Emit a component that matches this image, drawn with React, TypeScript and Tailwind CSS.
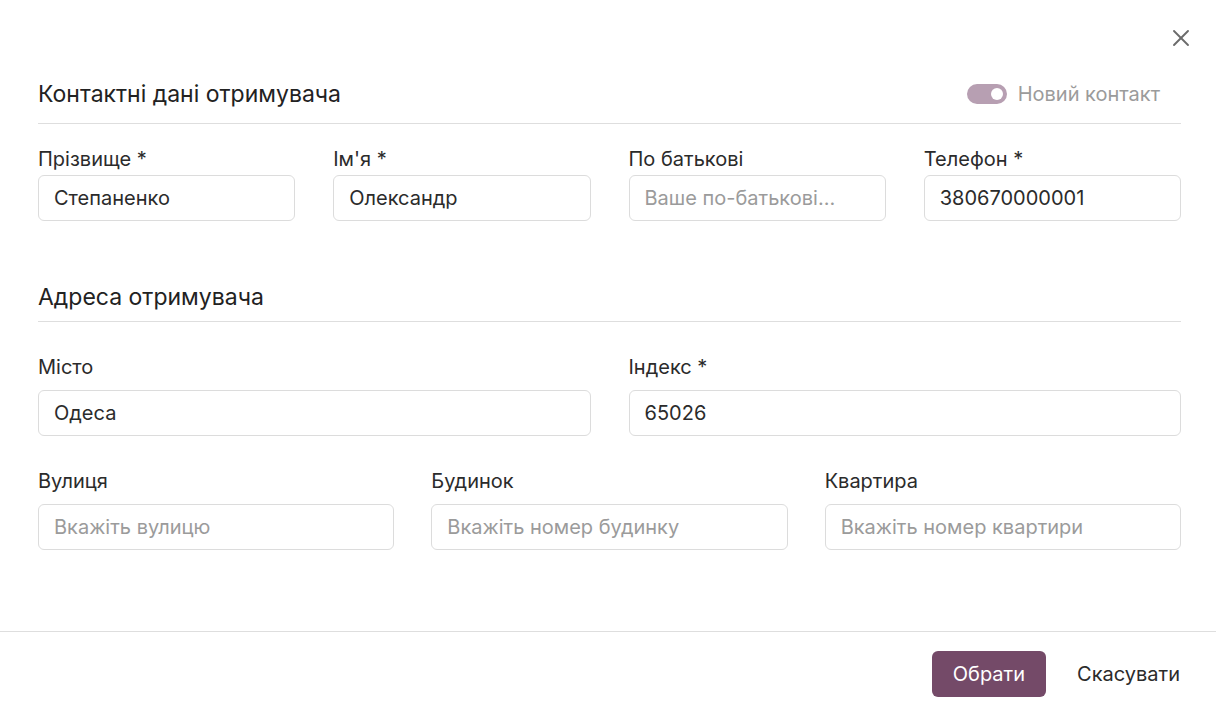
import { X } from 'lucide-react';

const labelCls = 'text-[20px] leading-[26px] text-[#2b2b2b]';
const inputCls =
  'h-[46px] w-full rounded-[6px] border border-[#dcdcdc] px-[15px] text-[20px] text-[#2b2b2b] outline-none placeholder:text-[#9b9b9b]';

function Field({ label, value, placeholder, gap }: { label: string; value?: string; placeholder?: string; gap: string }) {
  return (
    <div className="flex flex-col">
      <label className={labelCls}>{label}</label>
      <input className={`${gap} ${inputCls}`} defaultValue={value} placeholder={placeholder} />
    </div>
  );
}

export default function App() {
  return (
    <div className="h-[715px] w-[1216px] bg-white font-['Inter',sans-serif] flex flex-col">
      <div className="flex-1 pl-[38px] pr-[35px]">
        <div className="flex justify-end pt-[24px]">
          <button className="-mr-[14px] text-[#6b6b6b]">
            <X className="h-[28px] w-[28px]" strokeWidth={1.6} />
          </button>
        </div>

        <div className="mt-[27px] flex items-center justify-between border-b border-[#dedede] pb-[14px]">
          <h2 className="text-[23px] leading-[30px] text-[#222]">Контактні дані отримувача</h2>
          <div className="mr-[21px] flex items-center gap-[11px]">
            <div className="relative h-[20px] w-[40px] rounded-full bg-[#b79fb2]">
              <div className="absolute right-[4px] top-[4px] h-[12px] w-[12px] rounded-full bg-white" />
            </div>
            <span className="text-[20px] text-[#9b9b9b]">Новий контакт</span>
          </div>
        </div>

        <div className="mt-[22px] grid grid-cols-4 gap-x-[38px]">
          <Field gap="mt-[3px]" label="Прізвище *" value="Степаненко" />
          <Field gap="mt-[3px]" label="Ім'я *" value="Олександр" />
          <Field gap="mt-[3px]" label="По батькові" placeholder="Ваше по-батькові..." />
          <Field gap="mt-[3px]" label="Телефон *" value="380670000001" />
        </div>

        <div className="mt-[61px] border-b border-[#dedede] pb-[9px]">
          <h2 className="text-[23px] leading-[30px] text-[#222]">Адреса отримувача</h2>
        </div>

        <div className="mt-[32px] grid grid-cols-2 gap-x-[38px]">
          <Field gap="mt-[10px]" label="Місто" value="Одеса" />
          <Field gap="mt-[10px]" label="Індекс *" value="65026" />
        </div>

        <div className="mt-[32px] grid grid-cols-3 gap-x-[37px]">
          <Field gap="mt-[10px]" label="Вулиця" placeholder="Вкажіть вулицю" />
          <Field gap="mt-[10px]" label="Будинок" placeholder="Вкажіть номер будинку" />
          <Field gap="mt-[10px]" label="Квартира" placeholder="Вкажіть номер квартири" />
        </div>
      </div>

      <div className="flex h-[84px] items-center justify-end gap-[31px] border-t border-[#dedede] pr-[36px]">
        <button className="h-[46px] rounded-[6px] bg-[#744a68] px-[21px] text-[20px] text-white">Обрати</button>
        <button className="text-[20px] text-[#2b2b2b]">Скасувати</button>
      </div>
    </div>
  );
}
